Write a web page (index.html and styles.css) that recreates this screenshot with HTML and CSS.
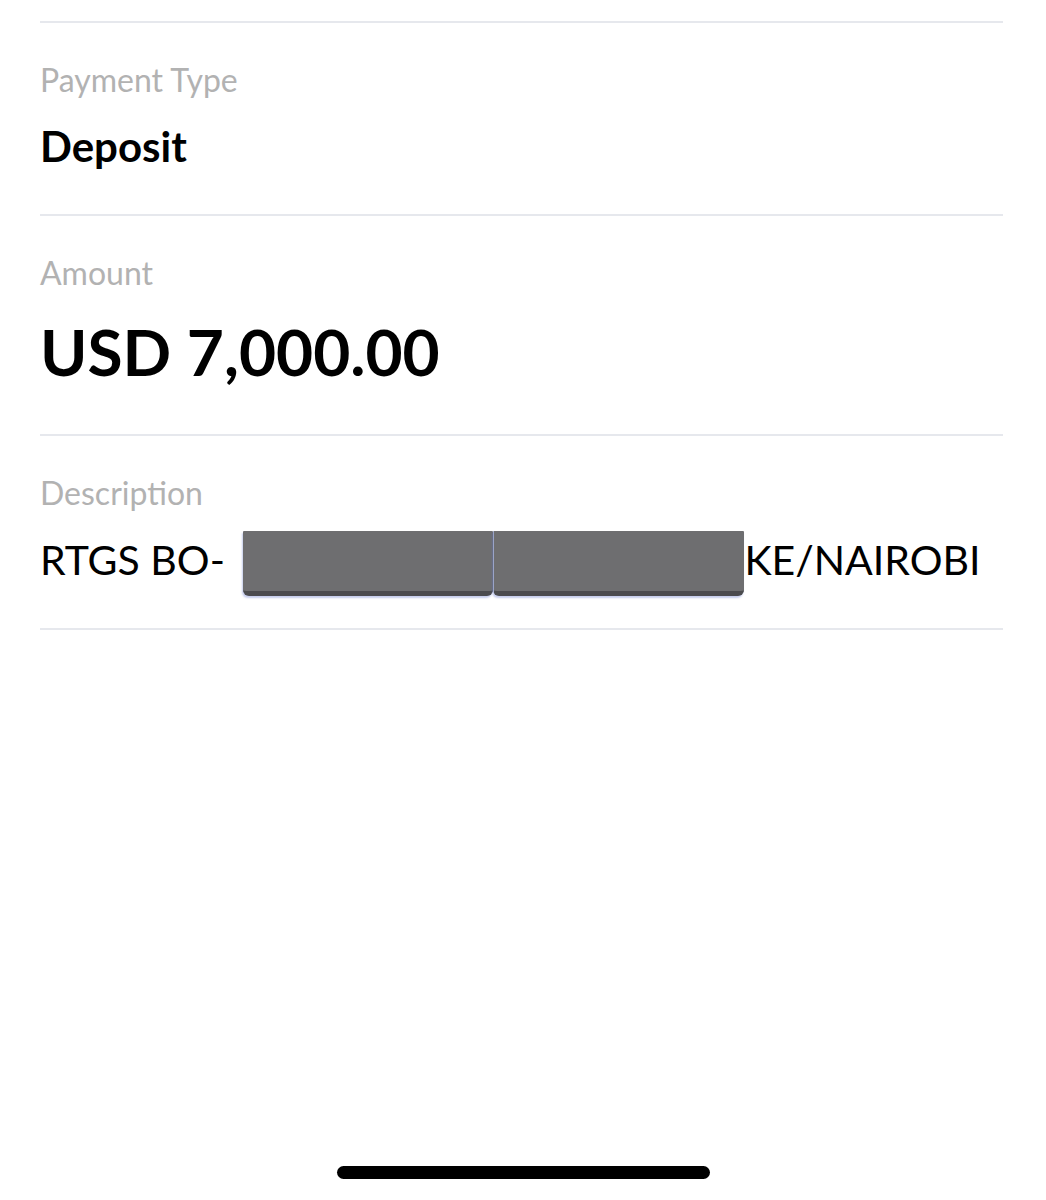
FILE: index.html
```html
<!DOCTYPE html>
<html>
<head>
    <title>Transaction Details</title>
    <meta charset="UTF-8">
    <meta name="viewport" content="width=device-width, initial-scale=1.0">
    <link rel="stylesheet" href="styles.css">
</head>
<body>
    <div class="screen">
        <div class="details">
            <div class="row">
                <div class="label">Payment Type</div>
                <div class="value type">Deposit</div>
            </div>
            <div class="row">
                <div class="label">Amount</div>
                <div class="value amount">USD 7,000.00</div>
            </div>
            <div class="row">
                <div class="label">Description</div>
                <div class="value desc">RTGS BO- <span class="redact first"></span><span class="redact second"></span>KE/NAIROBI</div>
            </div>
        </div>
        <div class="home-bar"></div>
    </div>
</body>
</html>
```

FILE: styles.css
```css
body {
    margin: 0;
    background: #ffffff;
    font-family: Lato, "Open Sans", sans-serif;
    color: #000;
}
.screen {
    height: 1200px;
    display: flex;
    flex-direction: column;
}
.details {
    margin: 21px 43px 0 40px;
    border-top: 2px solid #e6e8ed;
}
.row {
    padding: 38px 0 43px;
    border-bottom: 2px solid #e6e8ed;
}
.label {
    font-size: 32px;
    line-height: 38px;
    color: #b2b2b2;
}
.value {
    white-space: nowrap;
}
.type {
    font-size: 42px;
    line-height: 50px;
    font-weight: bold;
    margin-top: 22px;
}
.amount {
    font-size: 64px;
    line-height: 76px;
    font-weight: bold;
    margin-top: 22px;
    margin-bottom: 1px;
}
.desc {
    font-size: 41px;
    line-height: 50px;
    margin-top: 23px;
}
.redact {
    display: inline-block;
    height: 60px;
    margin: -5px 0 -11px;
    vertical-align: -10px;
    background: #6e6e70;
    border-bottom: 5px solid #4b4b4e;
    border-radius: 1px 1px 6px 6px;
    box-shadow: -1px 2px 2px rgba(90, 110, 200, 0.35);
}
.first {
    width: 250px;
    margin-left: 8px;
}
.second {
    width: 250px;
    border-left: 1px solid #9aa4c8;
}
.home-bar {
    margin: auto auto 21px;
    width: 373px;
    height: 13px;
    border-radius: 7px;
    background: #000;
}
```
